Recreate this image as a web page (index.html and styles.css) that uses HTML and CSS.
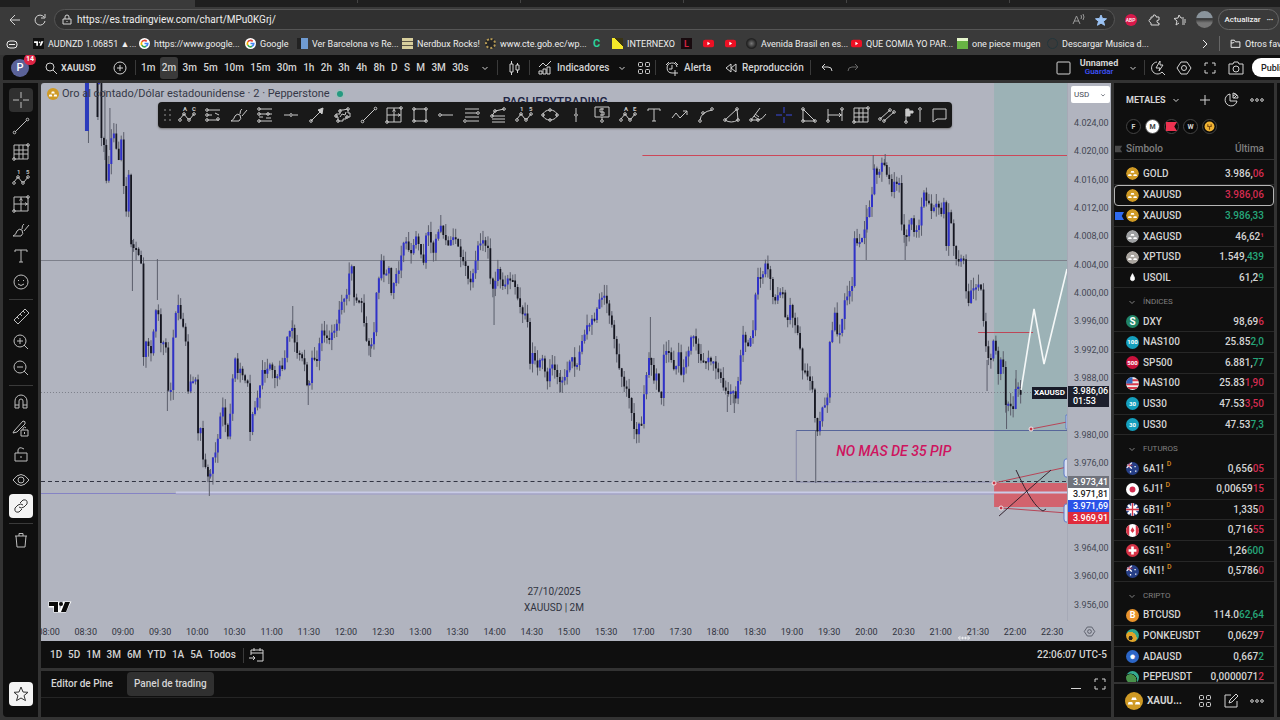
FILE: index.html
```html
<!DOCTYPE html>
<html lang="es">
<head>
<meta charset="utf-8">
<title>XAUUSD 3.986,06 — Unnamed</title>
<link rel="stylesheet" href="styles.css">
</head>
<body>
<div class="window">
  <div class="tabstrip"><span class="tab-active"></span><span class="tab"></span><span class="tab"></span><span class="tab"></span><span class="tab"></span><span class="tab"></span></div>
  <div class="address">
    <button class="plain" aria-label="Atrás" data-icon="back"></button>
    <button class="plain" aria-label="Recargar" data-icon="reload"></button>
    <div class="urlbox">
      <span data-icon="lock"></span>
      <input class="url" aria-label="Dirección" value="https://es.tradingview.com/chart/MPu0KGrj/">
      <button class="plain dim" aria-label="Leer en voz alta" data-icon="read"></button>
      <button class="plain star" aria-label="Favorito" data-icon="starfill"></button>
    </div>
    <span class="abp">ABP</span>
    <button class="plain" aria-label="Extensiones" data-icon="puzzle"></button>
    <button class="plain" aria-label="Favoritos" data-icon="starlist"></button>
    <span class="photo"></span>
    <button class="update">Actualizar<span>•••</span></button>
  </div>
  <nav class="bookmarks">
    <a href="#" class="bm-first" aria-label="Marcadores" data-icon="pill"></a>
    <a href="#" class="bm w105"><i class="fav tvfav" data-icon="tv"></i>AUDNZD 1.06851 ▲...</a>
    <a href="#" class="bm w105"><i class="fav" data-icon="google"></i>https://www.google...</a>
    <a href="#" class="bm w52"><i class="fav" data-icon="google"></i>Google</a>
    <a href="#" class="bm w104"><i class="fav score"></i>Ver Barcelona vs Re...</a>
    <a href="#" class="bm w83"><i class="fav nerd"></i>Nerdbux Rocks!</a>
    <a href="#" class="bm w105"><i class="fav eye"></i>www.cte.gob.ec/wp...</a>
    <a href="#" class="bm w27"><i class="fav green">C</i></a>
    <a href="#" class="bm w69"><i class="fav yellow"></i>INTERNEXO</a>
    <a href="#" class="bm w22"><i class="fav redl">L</i></a>
    <a href="#" class="bm w22" aria-label="YouTube"><i class="fav" data-icon="yt"></i></a>
    <a href="#" class="bm w27" aria-label="YouTube"><i class="fav" data-icon="yt"></i></a>
    <a href="#" class="bm w104"><i class="fav globe"></i>Avenida Brasil en es...</a>
    <a href="#" class="bm w105"><i class="fav" data-icon="yt"></i>QUE COMIA YO PAR...</a>
    <a href="#" class="bm w90"><i class="fav piece"></i>one piece mugen</a>
    <a href="#" class="bm grow"><i class="fav dark"></i>Descargar Musica d...</a>
    <button class="plain" aria-label="Más marcadores" data-icon="right"></button>
    <span class="vline"></span>
    <a href="#" class="bm others"><i class="fav" data-icon="folder"></i>Otros favoritos</a>
  </nav>

  <div class="app">
    <header class="topbar">
      <button class="avatar" aria-label="Perfil">P<span class="badge">14</span></button>
      <button class="tb symbol"><i data-icon="search"></i>XAUUSD</button>
      <button class="tb add" aria-label="Comparar" data-icon="pluscircle"></button>
      <span class="vline"></span>
      <div class="intervals" id="intervals"></div>
      <span class="vline"></span>
      <button class="tb w31" aria-label="Velas" data-icon="candles"></button>
      <span class="vline"></span>
      <button class="tb indic"><i data-icon="indic"></i>Indicadores</button>
      <button class="tb w22" aria-label="Favoritos de indicadores" data-icon="down"></button>
      <button class="tb w22" aria-label="Plantillas" data-icon="four"></button>
      <span class="vline"></span>
      <button class="tb alert"><i data-icon="alarm"></i>Alerta</button>
      <button class="tb replay"><i data-icon="rewind"></i>Reproducción</button>
      <span class="vline"></span>
      <button class="tb w26 undo" aria-label="Deshacer" data-icon="undo"></button>
      <button class="tb w26 dim" aria-label="Rehacer" data-icon="redo"></button>
      <span class="spacer"></span>
      <button class="tb w26" aria-label="Diseño" data-icon="square"></button>
      <button class="tb saved"><b>Unnamed</b><small>Guardar</small></button>
      <button class="tb w22" aria-label="Gestionar diseños" data-icon="down"></button>
      <span class="vline"></span>
      <button class="tb w26" aria-label="Búsqueda rápida" data-icon="quick"></button>
      <button class="tb w26" aria-label="Ajustes" data-icon="gear"></button>
      <button class="tb w26" aria-label="Pantalla completa" data-icon="full"></button>
      <button class="tb w26" aria-label="Captura" data-icon="camera"></button>
      <button class="publish">Publicar</button>
    </header>

    <aside class="rail" id="rail"></aside>

    <main class="center">
      <section class="chart">
        <div class="pane">
          <svg class="plot" id="plot" viewBox="41 83 1027 538" preserveAspectRatio="none">
            <rect x="995" y="83" width="73" height="400" fill="#9cb2b6"/>
            <rect x="995" y="483" width="73" height="24" fill="#d2636e"/>
            <path d="M41 493.5H176" stroke="#8583c4"/>
            <path d="M176 492.5H1068" stroke="#c9cbe6" stroke-width="2"/>
            <path d="M176 494H995" stroke="#9c9bc9"/>
            <path d="M41 260.500H1068" stroke="#7c7f8b"/>
            <path d="M41 392.500H1068" stroke="#7c7f8b" stroke-dasharray="1 2"/>
            <path d="M643 155.500H1068" stroke="#cc4657"/>
            <path d="M979 332.500H1034" stroke="#bd4656"/>
            <path d="M797 430.500H1068" stroke="#56659a"/>
            <path d="M797 431V482H995" fill="none" stroke="#8587a8"/>
            <g id="candles"></g>
            <path d="M41 481.500H1068" stroke="#303341" stroke-dasharray="4 3"/>
            <path d="M1022 390L1035 309L1045 364L1068 269" fill="none" stroke="#f5f8f8" stroke-width="1.600"/>
            <path d="M1032 429L1068 422M995 483L1068 467M1002 508L1068 513" stroke="#b84456"/>
            <path d="M1017 470Q1034 507 1044 511L1047 509M1000 516Q1030 489 1052 470" fill="none" stroke="#33232f"/>
            <g fill="#c63848" stroke="#f3e7ea"><circle cx="1032" cy="429" r="2"/><circle cx="995" cy="483" r="2"/><circle cx="1002" cy="508" r="2"/></g>
            <g fill="#d8def0" stroke="#5d79c8"><path d="M1069 415h-2v14h2M1069 459h-2q-2 0-2 3v12q0 3 2 3h2M1069 504h-2q-2 0-2 3v12q0 3 2 3h2"/></g>
          </svg>
          <div class="legend"><span class="gold" data-icon="gold"></span>Oro al contado/Dólar estadounidense · 2 · Pepperstone<span class="live"></span></div>
          <div class="watermark-top">PAGLIERYTRADING</div>
          <div class="note">NO MAS DE 35 PIP</div>
          <div class="watermark"><span>27/10/2025</span><span>XAUUSD | 2M</span></div>
          <span class="tvlogo" data-icon="tvbig"></span>
          <span class="symtag">XAUUSD</span>
          <div class="floatbar" id="floatbar"><span class="grip" data-icon="grip"></span></div>
        </div>
        <div class="prices">
          <div class="currency"><select aria-label="Divisa"><option>USD</option></select><i data-icon="down"></i></div>
          <div class="scale" id="scale"></div>
          <div class="tag now">3.986,06<br><span>01:53</span></div>
          <div class="tags"><span class="t1">3.973,41</span><span class="t2">3.971,81</span><span class="t3">3.971,69</span><span class="t4">3.969,91</span></div>
        </div>
        <div class="times" id="times"></div>
        <button class="axisgear" aria-label="Ajustes de escala" data-icon="gear"></button>
        <span class="resize" data-icon="hresize"></span>
      </section>
      <div class="ranges"><div class="rangelist" id="ranges"></div><span class="vline"></span><button class="tb w26" aria-label="Ir a fecha" data-icon="calendar"></button><span class="spacer"></span><button class="tb clock">22:06:07 UTC-5</button></div>
      <div class="bottom">
        <div class="tabs"><button class="btab">Editor de Pine</button><button class="btab on">Panel de trading</button><span class="spacer"></span><button class="tb w26" aria-label="Minimizar" data-icon="min"></button><button class="tb w22" aria-label="Maximizar" data-icon="full"></button></div>
        <div class="bottom-body"></div>
      </div>
    </main>

    <aside class="watch">
      <div class="whead"><button class="tb wname">METALES<i data-icon="down"></i></button><span class="spacer"></span><button class="tb w26" aria-label="Añadir símbolo" data-icon="plus"></button><button class="tb w26" aria-label="Resumen" data-icon="pie"></button><button class="tb w26" aria-label="Más" data-icon="dots"></button></div>
      <div class="chips"><button class="chip">F</button><button class="chip on">M</button><button class="chip" aria-label="Bandera" data-icon="redflag"></button><button class="chip">W</button><button class="chip" aria-label="Idea" data-icon="idea"></button></div>
      <div class="cols"><i data-icon="flag"></i><span>Símbolo</span><span>Última</span></div>
      <div class="listwrap"><table class="list"><tbody id="list"></tbody></table></div>
      <div class="wfoot"><span class="bigcoin" data-icon="gold"></span><b>XAUU...</b><span class="spacer"></span><button class="tb w26" aria-label="Vista" data-icon="four"></button><button class="tb w26" aria-label="Notas" data-icon="edit"></button><button class="tb w26" aria-label="Más" data-icon="dots"></button></div>
    </aside>
    <aside class="edge"></aside>
  </div>
</div>
<script src="script.js"></script>
</body>
</html>
```
FILE: styles.css
```css
* { box-sizing: border-box; }
body { margin: 0; background: #333; color: #d4d4d4; font: 500 10px/14px Roboto, "Liberation Sans", sans-serif; overflow: hidden; }
button, input, select { font: inherit; color: inherit; background: none; border: 0; padding: 0; margin: 0; }
a { color: inherit; text-decoration: none; }
i { font-style: normal; }
.ic { display: block; width: 20px; height: 20px; fill: none; stroke: currentColor; flex: none; }
.window { height: 100vh; display: flex; flex-direction: column; background: #3a3a3a; }
.spacer { flex: 1; }
.vline { width: 1px; height: 15px; background: #3a3a3a; flex: none; }

.tabstrip { display: flex; height: 7px; background: #1f1f1f; flex: none; padding-left: 30px; }
.tab-active { width: 165px; background: #3a3a3a; }
.tab { width: 163px; border-right: 1px solid #444; height: 3px; }
.address { display: flex; align-items: center; height: 25px; padding-left: 2px; flex: none; }
.plain { display: flex; align-items: center; justify-content: center; width: 25px; }
.plain.dim { color: #999; }
.urlbox { flex: 1; display: flex; align-items: center; height: 21px; border: 1px solid #555; border-radius: 11px; background: #303030; padding-left: 2px; padding-right: 3px; margin-left: 2px; }
.url { flex: 1; font-weight: 400; font-size: 10px; color: #eee; outline: 0; }
.star { color: #9cc4f5; width: 20px; }
.abp { width: 12px; height: 12px; border-radius: 6px; background: #d8184a; color: #fff; font-size: 5px; line-height: 12px; text-align: center; margin: 0 6px 0 10px; }
.photo { width: 17px; height: 17px; border-radius: 9px; background: linear-gradient(#8a949c 40%, #303030 45%, #777 70%); margin: 0 5px 0 3px; }
.update { display: flex; gap: 6px; height: 21px; align-items: center; border: 1px solid #666; border-radius: 11px; padding: 0 5px 0 6px; margin-right: 1px; color: #eee; font-size: 8px; }
.update span { font-size: 6px; }
.bookmarks { display: flex; align-items: center; height: 23px; flex: none; padding-left: 2px; font-size: 9px; font-weight: 400; color: #eee; white-space: nowrap; overflow: hidden; }
.bm-first { width: 31px; flex: none; }
.bm { display: flex; align-items: center; gap: 4px; flex: none; overflow: hidden; }
.w105 { width: 106px; } .w104 { width: 105px; } .w52 { width: 52px; } .w83 { width: 83px; } .w27 { width: 21px; } .w69 { width: 69px; } .w22 { width: 22px; } .w90 { width: 90px; }
.grow { flex: 1; }
.fav { width: 11px; height: 11px; flex: none; display: flex; align-items: center; justify-content: center; font-size: 9px; font-weight: 700; }
.fav .ic { width: 11px; height: 11px; }
.tvfav { background: #101010; color: #fff; }
.score { background: linear-gradient(90deg, #222 35%, #6f9bd2 35%); }
.nerd { background: repeating-linear-gradient(#d8cf9d 0 3px, #5c5546 3px 4px); }
.eye { border: 2px dotted #b79b55; border-radius: 6px; background: #262626; }
.green { color: #2bd19a; font-size: 11px; }
.yellow { background: linear-gradient(45deg, #f5e929 60%, #3a3515 60%); }
.redl { background: #180a0e; color: #d22440; }
.globe { border-radius: 6px; background: radial-gradient(#777, #222 60%); }
.piece { background: linear-gradient(#e5f5cc 30%, #68b344 30%); }
.dark { border: 1px solid #24363c; border-radius: 6px; }
.others { width: 50px; margin-left: 10px; }
.bookmarks .vline { background: #666; }
.bookmarks .plain { width: 29px; }

.app { flex: 1; min-height: 0; display: grid; grid-template: 25px minmax(0, 1fr) / 35px minmax(0, 1fr) 160px 3px; gap: 3px 3px; padding: 0 0 3px 3px; background: #333; }
.topbar { grid-column: 1 / -1; display: flex; align-items: center; background: #0f0f0f; border-top-left-radius: 4px; overflow: hidden; }
.tb { display: flex; align-items: center; justify-content: center; white-space: nowrap; height: 20px; }
.w31 { width: 31px; } .w26 { width: 26px; flex: none; } .tb.w22 { width: 22px; flex: none; }
.dim { color: #666; }
.avatar { width: 18px; height: 18px; border-radius: 9px; background: #5a6299; color: #fff; font-size: 11px; margin-left: 8px; position: relative; flex: none; }
.badge { position: absolute; right: -7px; top: -5px; background: #dc2444; color: #fff; border-radius: 6px; width: 12px; height: 11px; font-size: 7px; line-height: 11px; font-weight: 700; }
.symbol { width: 66px; margin-left: 9px; font-weight: 700; justify-content: flex-start; padding-left: 3px; font-size: 9px; }
.add { width: 31px; }
.intervals { display: flex; justify-content: space-between; align-items: center; width: 361px; padding-left: 3px; flex: none; }
.interval { height: 22px; padding: 0 2px; border-radius: 3px; }
.interval.icon { width: 24px; padding: 0 2px; }
.interval.on { background: #3a3a3a; }
.indic { width: 81px; padding-left: 5px; justify-content: flex-start; gap: 2px; }
.alert { width: 65px; padding-left: 6px; justify-content: flex-start; gap: 2px; }
.replay { width: 89px; gap: 1px; justify-content: flex-start; }
.undo { margin-left: 3px; }
.saved { flex-direction: column; width: 46px; line-height: 9px; }
.saved small { font-size: 8px; color: #3f54ff; line-height: 8px; }
.saved b { font-weight: 700; font-size: 9px; }
.publish { background: #fff; color: #222; border-radius: 9px; height: 19px; width: 60px; margin: 0 -32px 0 3px; padding-left: 9px; text-align: left; font-size: 9px; flex: none; }

.rail { background: #0f0f0f; display: flex; flex-direction: column; align-items: center; padding: 4px 0 10px; border-bottom-left-radius: 4px; }
.tool { width: 24px; height: 24px; margin: 1px 0; border-radius: 4px; display: flex; align-items: center; justify-content: center; color: #bdbdbd; }
.tool.on { background: #303030; }
.tool.lit { background: #f4f4f4; color: #333; }
.tool.last { margin-top: auto; }
.sep { width: 24px; height: 1px; background: #3a3a3a; margin: 4px 0 3px; }

.center { display: flex; flex-direction: column; min-width: 0; }
.chart { flex: 1; min-height: 0; position: relative; display: grid; grid-template: minmax(0, 1fr) 20px / minmax(0, 1fr) 43px; background: #b1b4bf; color: #444854; overflow: hidden; border-top-left-radius: 3px; }
.pane { position: relative; overflow: hidden; border-right: 1px solid #a6a9b6; }
.plot { position: absolute; inset: 0; width: 100%; height: 100%; }
.legend { position: absolute; left: 6px; top: 4px; display: flex; align-items: center; gap: 3px; font-size: 11px; font-weight: 400; color: #353847; white-space: nowrap; }
.gold .ic { width: 12px; height: 12px; }
.live { width: 6px; height: 6px; border-radius: 3px; background: #259a80; margin-left: 4px; box-shadow: 0 0 0 2px #a4bbbb; }
.watermark-top { position: absolute; left: 45%; top: 12px; font-size: 12px; color: #202443; }
.note { position: absolute; left: 77.5%; top: 67%; font-size: 14px; line-height: 16px; font-style: italic; font-weight: 500; color: #ce145e; white-space: nowrap; }
.watermark { position: absolute; left: 50%; bottom: 6px; transform: translateX(-50%); display: flex; flex-direction: column; text-align: center; gap: 2px; color: #30333e; font-weight: 400; }
.tvlogo { position: absolute; left: 7px; bottom: 4px; color: #0a0a0a; }
.tvlogo .ic { width: 24px; height: 20px; }
.symtag { position: absolute; right: 0; top: 56.5%; background: #171a27; color: #fff; font-size: 8px; line-height: 12px; padding: 0 2px; font-weight: 700; }
.floatbar { position: absolute; left: 117px; top: 19px; display: flex; align-items: center; width: 794px; height: 26px; background: #191919; border-radius: 4px; color: #c9c9c9; box-shadow: 0 1px 2px #777; }
.floatbar .tb { flex: 1; height: 26px; min-width: 0; }
.grip { width: 16px; color: #555; }
.picked { color: #3a4ae0; }
.prices { position: relative; display: flex; flex-direction: column; padding: 3px 1px 2px; font-weight: 400; font-size: 9px; }
.currency { display: flex; align-items: center; background: #fff; border-radius: 2px; height: 17px; font-size: 8px; width: 39px; flex: none; margin: 0 0 6px 2px; }
.currency select { appearance: none; flex: 1; min-width: 0; padding-left: 3px; outline: 0; }
.currency .ic { width: 14px; height: 14px; }
.scale { flex: 1; display: flex; flex-direction: column; }
.scale span { flex: 1; display: flex; align-items: center; padding-left: 5px; }
.tag { position: absolute; left: 0; width: 41px; padding-left: 5px; font-weight: 500; color: #fff; line-height: 10px; }
.now { top: 56.400%; background: #1c1f2c; height: 21px; }
.tags { position: absolute; left: 0; width: 41px; top: 73%; display: flex; flex-direction: column; font-weight: 500; color: #fff; line-height: 12px; }
.tags span { padding-left: 5px; height: 12px; }
.t1 { background: #70737c; } .t2 { background: #fff; color: #222; } .t3 { background: #2b52e8; } .t4 { background: #e02b3c; }
.times { display: flex; margin: 0 -3px 0 -11px; padding-top: 2px; align-items: center; font-weight: 400; font-size: 9px; color: #30333e; overflow: hidden; }
.times span { flex: 1; text-align: center; }
.axisgear { display: flex; align-items: center; justify-content: center; }
.axisgear .ic { width: 15px; height: 15px; }
.resize { position: absolute; right: 138px; bottom: -4px; color: #fff; }
.resize .ic { width: 18px; height: 14px; }
.ranges { display: flex; align-items: center; height: 27px; padding-top: 1px; background: #0f0f0f; flex: none; }
.rangelist { display: flex; width: 186px; justify-content: space-between; margin: 0 7px 0 9px; flex: none; }
.clock { padding-right: 4px; }
.bottom { height: 46px; margin-top: 3px; background: #0f0f0f; flex: none; }
.tabs { display: flex; height: 27px; align-items: center; padding: 0 0 0 3px; border-bottom: 1px solid #252525; }
.btab { height: 24px; padding: 0 7px; margin-right: 7px; border-radius: 4px; }
.btab.on { background: #303030; }

.watch { background: #0f0f0f; display: flex; flex-direction: column; min-height: 0; }
.whead { display: flex; align-items: center; height: 33px; flex: none; padding-right: 4px; }
.wname { font-weight: 700; margin-left: 12px; font-size: 9px; }
.chips { display: flex; gap: 4px; height: 21px; align-items: center; padding-left: 12px; flex: none; }
.chip { width: 15px; height: 15px; border-radius: 8px; border: 1px solid #444; background: #090909; font-size: 7px; line-height: 12px; font-weight: 700; display: flex; align-items: center; justify-content: center; }
.chip.on { background: #fff; color: #444; }
.chip .ic { width: 11px; height: 11px; flex: none; }
.cols { display: flex; justify-content: space-between; align-items: center; height: 23px; flex: none; padding: 2px 10px 0 1px; border-bottom: 1px solid #333; color: #808080; }
.cols i .ic { width: 8px; height: 10px; }
.cols i + span { margin-right: auto; margin-left: 3px; }
.listwrap { flex: 1; min-height: 0; overflow: hidden; padding-top: 4px; }
.list { display: block; height: calc(100% + 6px); }
.list tbody { display: flex; flex-direction: column; height: 100%; }
.row { flex: 41 1 0; display: flex; align-items: center; min-height: 0; border-bottom: 1px solid #272727; }
.row.sel { border: 1px solid #b5b5b5; border-radius: 4px; }
.row td { padding: 0; display: flex; align-items: center; }
.row td.mark { width: 10px; padding-left: 1px; flex: none; }
.row.sel td.mark { width: 9px; }
.mark .ic { width: 9px; height: 10px; }
.coin { width: 13px; height: 13px; border-radius: 7px; overflow: hidden; margin: 0 4px 0 2px; flex: none; display: flex; align-items: center; justify-content: center; font-size: 6px; color: #fff; font-weight: 700; }
.coin .ic { width: 13px; height: 13px; }
.coin.teal { background: #159fbd; } .coin.red { background: #c9123c; } .coin.dxy { background: #218466; font-size: 10px; } .coin.btc { background: #e8932b; font-size: 9px; } .coin.ada { background: #2c66c7; } .coin.ponke { background: radial-gradient(circle at 35% 70%, #222 15%, #e0a52a 18% 48%, #30a48c 50%); } .coin.pepe { background: radial-gradient(circle at 35% 70%, #48934b 45%, #0f0f0f 50%, #34ab91 55%); }
.name { font-weight: 500; }
.name sup { color: #d58a22; font-size: 7px; margin: -8px 0 0 3px; line-height: 7px; font-weight: 500; }
.row td.val { margin-left: auto; padding-right: 10px; font-weight: 500; }
.row.sel td.val { padding-right: 9px; }
.up { color: #26a67a; } .down { color: #d32b50; }
.group { flex: 49 1 0; display: flex; align-items: center; min-height: 0; color: #808080; font-weight: 400; font-size: 8px; }
.group td { display: flex; align-items: center; padding: 4px 0 0 8px; gap: 1px; }
.wfoot { display: flex; align-items: center; height: 35px; border-top: 2px solid #333; padding: 0 4px 0 11px; flex: none; }
.bigcoin .ic { width: 18px; height: 18px; }
.wfoot b { margin-left: 4px; font-size: 10px; }
.edge { background: #0f0f0f; }
```
FILE: script.js
```js
const dot = (...p) => p.map(([x, y]) => `<circle cx="${x}" cy="${y}" r="1.300"/>`).join('');
const P = d => `<path d="${d}"/>`;
const letters = (a, b) => `<g stroke="none" fill="currentColor" font-size="6" font-weight="700"><text x="6" y="6">${a}</text><text x="15" y="6">${b}</text></g>`;
const wave = P('M3 14L7 9L11 14L13 14L17 9') + dot([3, 15], [7, 9], [12, 15], [17, 9]);
const bars = '<circle cx="10" cy="10" r="10" fill="BG" stroke="none"/><path d="M8 6h4l1 3H7zM4 11h4l1 3H3zM12 11h4l1 3h-6z" fill="#fff" stroke="none"/>';
const ICONS = {
  back: P('M15 10H5M10 5L5 10L10 15'),
  reload: P('M14 7A5 5 0 1 0 15 11M15 4V8H11'),
  lock: P('M6 9h8v5H6zM8 9V7a2 2 0 0 1 4 0v2M10 11v1'),
  read: P('M5 14L8.500 6L12 14M6 11h5M13 5q1 2 0 4M15 4q2 3 0 6'),
  starfill: '<path fill="currentColor" d="M10 5l1.500 3.500 4 .3-3 2.500 1 4-3.500-2.200L6.500 15.300l1-4-3-2.500 4-.3z"/>',
  star: P('M10 3l2 5 5 .3-4 3.300 1.500 5L10 14l-4.500 2.600L7 11.600 3 8.300 8 8z'),
  puzzle: P('M6 7h2q0-3 2-2t1 2h3v3q-3 0-2 2t2 1v2H6v-2q-2-1-2-2.500T6 9z'),
  starlist: P('M14 8h-3L9 5 8 8 4 8.500l3 2.500-1 4 3-2M12 10h4M12 12h4M12 14h3'),
  pill: '<rect x="5" y="7" width="10" height="7" rx="3"/>' + P('M7 10.500h6'),
  tv: '<path stroke="none" fill="currentColor" d="M2 6h7v8H6V9H2zM15 6h4l-4 8h-3z"/><circle cx="12" cy="8" r="1.500" fill="currentColor" stroke="none"/>',
  tvbig: '<path stroke="#fff" stroke-width="3" fill="#fff" d="M0 6h8v8H5V9H0zM14 6h5l-4 8h-4z"/><path stroke="none" fill="#0a0a0a" d="M-1 5h9v10H4V9h-5zM15 5h5l-4 10h-5z"/><circle cx="11" cy="7" r="2" fill="#0a0a0a" stroke="none"/>',
  google: '<circle cx="10" cy="10" r="10" fill="#fff" stroke="none"/><g stroke-width="3"><path stroke="#e34133" d="M5 7a6 6 0 0 1 9-1"/><path stroke="#f4b400" d="M5 7a7 7 0 0 0 0 6"/><path stroke="#34a853" d="M5 13a6 6 0 0 0 8 2"/><path stroke="#4285f4" d="M10 10h6q0 3-3 5"/></g>',
  yt: '<rect x="0" y="3" width="20" height="14" rx="4" fill="#ed1024" stroke="none"/><path fill="#fff" stroke="none" d="M8 7l5 3-5 3z"/>',
  right: P('M8 6l4 4-4 4'), down: P('M7.500 9L10 11.500L12.500 9'),
  folder: '<g stroke-width="1.800">' + P('M2 4h6l2 3h8v10H2zM8 7l-2 2H2') + '</g>',
  search: '<circle cx="9" cy="9" r="4"/>' + P('M12 12l4 4'),
  pluscircle: '<circle cx="10" cy="10" r="6"/>' + P('M10 7v6M7 10h6'),
  candles: P('M6 6h3v8H6zM7.500 3v3M7.500 14v3M12 7h3v5h-3zM13.500 5v2M13.500 12v3'),
  indic: P('M4 9l4-4 3 3 5-5M4 16v-3h3v3zM8 16v-5h3v5zM12 16V9h3v7z'),
  four: '<rect x="4.500" y="4.500" width="4" height="4" rx="1"/><rect x="11.500" y="4.500" width="4" height="4" rx="1"/><rect x="4.500" y="11.500" width="4" height="4" rx="1"/><rect x="11.500" y="11.500" width="4" height="4" rx="1"/>',
  alarm: P('M15 9A5 5 0 1 0 10 15M10 7v4H7M4 7L7 4M13 4l3 3M13 12v6M10 15h6'),
  rewind: P('M10 6v8L5 10zM15 6v8l-5-4z'),
  undo: P('M8 6L5 9l3 3M5 9h6q4 0 4 4'), redo: P('M12 6l3 3-3 3M15 9H9q-4 0-4 4'),
  square: '<rect x="4" y="4" width="13" height="12" rx="1"/>',
  quick: P('M9 4A6 6 0 1 0 14 14l3 3M12 3L8 10h4l-1 3 4-6h-3z'),
  gear: P('M7 4h6l4 6-4 6H7L3 10z') + '<circle cx="10" cy="10" r="2.500"/>',
  full: P('M5 8V5h3M12 5h3v3M15 12v3h-3M8 15H5v-3'),
  camera: P('M3 6h4l1-2h4l1 2h4v10H3z') + '<circle cx="10" cy="11" r="3"/>',
  cross: P('M10 2v6M10 12v6M2 10h6M12 10h6'),
  line: P('M4 16L16 4') + dot([3.500, 16.500], [16.500, 3.500]),
  grid: P('M3 3h14v14H3zM8 3v14M12 3v14M3 8h14M3 12h14') + dot([3, 17], [17, 3]),
  wave15: wave + letters('1', '5'), waveAC: wave + letters('A', 'C'), waveAE: wave + letters('A', 'E'),
  gann: P('M3 3h14v14H3zM10 3v14M3 10h14M8.500 6.500l1.500-2 1.500 2M14 8.500l2 1.500-2 1.500') + dot([3, 17], [17, 3]),
  brush: P('M2 16q3-1 4-5 2-3 5-1 2 4-1 6zM11 9q0-4 2-5M13 11l5-6'),
  text: P('M4 6V4h12v2M10 4v12M8 16h4'),
  smile: '<circle cx="10" cy="10" r="7"/>' + P('M7.500 8v1M12.500 8v1M7 12q3 3 6 0'),
  ruler: P('M3 14L14 3l4 4L7 18zM6 11l2 2M9 8l2 2M12 5l2 2'),
  zin: '<circle cx="9" cy="9" r="6"/>' + P('M13 13l4 4M9 6v6M6 9h6'),
  zout: '<circle cx="9" cy="9" r="6"/>' + P('M13 13l4 4M6 9h6'),
  magnet: P('M4 16V9a6 6 0 0 1 12 0v7h-4V9a2 2 0 0 0-4 0v7zM4 13h4M12 13h4'),
  penlock: P('M3 13L12 3q3 0 2 3L6 14l-4 1zM10 12h7v6h-7zM12 12v-2q2-2 3 0M13.500 14v2'),
  unlock: P('M4 9h12v8H4zM7 9V6q1-4 6-1M10 12v2'),
  eyeic: P('M2 10q8-11 16 0-8 11-16 0') + '<circle cx="10" cy="10" r="3"/>',
  link: P('M9 7l3-3q5-1 4 4l-3 3q-3 2-5 0M11 13l-3 3q-5 1-4-4l3-3q3-2 5 0'),
  trash: P('M4 6h12M8 6V3.500h4V6M5 6l1 11h8l1-11'),
  fibch: P('M4 5h13M4 10h5M12 8l4 2M4 15h12') + dot([4, 5], [4, 10], [4, 15], [15, 14]),
  fibch2: P('M4 4h13M4 9h13M4 12h4M11 13h5M4 16h13') + dot([4, 4], [4, 9], [13, 9], [4, 16]),
  hdot: P('M3 10h5M12 10h5') + dot([10, 10]),
  arrow: P('M4 16L15 5') + '<path fill="currentColor" d="M16 3l-1 6-4-4z"/>' + dot([4, 16]),
  cluster: P('M5 16V12H3V9h4V5h3l5-1v4h2v4h-4v2h-3v2zM7 12l2-3 3 1 1-3') + dot([5, 16], [15, 4], [3, 11], [14, 12], [7, 6]),
  rect: P('M4 4h12v12H4z') + dot([4, 4], [16, 4], [4, 16], [16, 16]),
  hray: P('M5 10h12') + dot([4, 10]),
  fib: P('M3 4h14M3 8h12M3 12h14M5 16h12') + dot([16, 8], [3, 16]),
  speed: P('M4 11l3-5 9-2M4 11h13M4 14h13M4 17h13') + dot([4, 11], [7, 6], [16, 4]),
  ellipse: '<ellipse cx="10" cy="10" rx="7" ry="5"/>' + dot([3, 10], [17, 10], [10, 5], [10, 15]),
  vdot: P('M10 3v5M10 12v5') + dot([10, 10]),
  pricenote: P('M3 2h14v10H3zM10 12v3M12 4H8v3h4v3H8M10 3v8') + dot([10, 16]),
  zig: P('M2 13l4-5 4 5 7-7M13 6h4v4'),
  curve: P('M4 15q1-8 12-10') + dot([4, 16], [7, 8], [16, 4]),
  tri: P('M3 15L15 4l1 11q-7 4-13 0') + dot([3, 15], [15, 4], [16, 15]),
  fork: P('M3 15L12 3M3 15h7q4 0 8-6M6 11l5 4M7 9l4 3') + dot([3, 15], [10, 15]),
  tri2: P('M4 16V4l12 12z') + dot([4, 4], [4, 16], [16, 16]),
  range: P('M3 4v12M17 4v12M3 10h14M14 8l2 2-2 2') + dot([3, 16], [17, 4]),
  channel: P('M3 14L13 5M7 16L17 7') + dot([3, 14], [13, 5], [7, 16], [17, 7]),
  profile: '<path fill="currentColor" d="M3 4h3v2h4v2H7v3H3z"/>' + P('M3 4v13M17 6v11') + dot([3, 17], [17, 4]),
  comment: P('M4 4h13v10H8l-4 3z'),
  grip: '<g stroke-width="2" stroke-dasharray="2 3">' + P('M7 4v12M12 4v12') + '</g>',
  hresize: P('M2 10h16M5 7l-3 3 3 3M15 7l3 3-3 3M8 8v4M12 8v4'),
  calendar: P('M4 10V5h12v11h-6M4 8h12M7 3v3M13 3v3M2 13h6M6 11l2 2-2 2'),
  min: P('M5 14.500h10'),
  plus: P('M10 5v10M5 10h10'),
  pie: P('M9 4A6 6 0 1 0 16 11H9zM12 8V3q5 1 5 5zM12 6l3-2M13 8l3-3'),
  dots: dot([5, 10], [10, 10], [15, 10]),
  edit: P('M10 4H4v12h12v-6M8 12l1-3 6-6 2 2-6 6z'),
  flag: '<path fill="#4a4a4a" stroke="none" d="M0 2h18l-5 8 5 8H0z"/>',
  blueflag: '<path fill="#2f6bf0" stroke="none" d="M0 1h20l-5 9 5 9H0z"/>',
  redflag: '<path fill="#ec3250" stroke="none" d="M0 2h20l-5 8 5 8H0z"/>',
  idea: '<circle cx="10" cy="10" r="9" fill="#efb233" stroke="none"/><path stroke="#7b4b11" stroke-width="2" d="M7 6v4h6V6M10 10v6"/>',
  gold: bars.replace('BG', '#cf9a25'), silver: bars.replace('BG', '#9fa1a3'), plat: bars.replace('BG', '#aaa59f'),
  oil: '<path d="M10 4l3 6q1 5-3 5t-3-5z" fill="#fff"/>',
  us: '<rect width="20" height="20" fill="#eee" stroke="none"/><path stroke="#d93b4c" stroke-width="3" d="M0 5h20M0 11h20M0 17h20"/><path fill="#3469bd" stroke="none" d="M0 0h10v10H0z"/>',
  au: '<rect width="20" height="20" fill="#263f87" stroke="none"/><path stroke="#fff" stroke-width="2" d="M0 2l9 8M9 1L1 9"/><path stroke="#d63346" d="M5 0v9M0 5h10"/><path fill="#fff" stroke="none" d="M13 6h2v2h-2zM14 13h2v2h-2zM6 14h2v2H6z"/>',
  jp: '<rect width="20" height="20" fill="#fff" stroke="none"/><circle cx="10" cy="10" r="4.500" fill="#d52c4f" stroke="none"/>',
  gb: '<rect width="20" height="20" fill="#304b91" stroke="none"/><path stroke="#fff" stroke-width="4" d="M0 0l20 20M20 0L0 20M10 0v20M0 10h20"/><path stroke="#d23445" stroke-width="2" d="M10 0v20M0 10h20"/>',
  ca: '<rect width="20" height="20" fill="#fff" stroke="none"/><path fill="#d93447" stroke="none" d="M0 0h5v20H0zM15 0h5v20h-5zM10 5l3 5-3 4-3-4z"/>',
  ch: '<rect width="20" height="20" fill="#d83347" stroke="none"/><path stroke="#fff" stroke-width="4" d="M10 4v12M4 10h12"/>'
};
const icon = n => `<svg class="ic" viewBox="0 0 20 20" aria-hidden="true">${ICONS[n]}</svg>`;
const $ = id => document.getElementById(id);

$('intervals').innerHTML = ['1m', '2m', '3m', '5m', '10m', '15m', '30m', '1h', '2h', '3h', '4h', '8h', 'D', 'S', 'M', '3M', '30s']
  .map(t => `<button class="interval${t === '2m' ? ' on' : ''}">${t}</button>`).join('') + `<button class="interval icon" aria-label="Más intervalos">${icon('down')}</button>`;
$('ranges').innerHTML = ['1D', '5D', '1M', '3M', '6M', 'YTD', '1A', '5A', 'Todos'].map(t => `<button class="range">${t}</button>`).join('');

$('rail').innerHTML = ['cross', 'line', 'grid', 'wave15', 'gann', 'brush', 'text', 'smile', '-', 'ruler', 'zin', 'zout', '-', 'magnet', 'penlock', 'unlock', 'eyeic', 'link', '-', 'trash', 'star']
  .map(n => n === '-' ? '<span class="sep"></span>' : `<button class="tool${n === 'cross' ? ' on' : ''}${n === 'link' || n === 'star' ? ' lit' : ''}${n === 'star' ? ' last' : ''}" aria-label="${n}">${icon(n)}</button>`).join('');
$('floatbar').innerHTML += ['waveAC', 'fibch', 'brush', 'fibch2', 'hdot', 'arrow', 'cluster', 'line', 'gann', 'rect', 'hray', 'fib', 'speed', 'wave15', 'ellipse', 'vdot', 'pricenote', 'waveAE', 'text', 'zig', 'curve', 'tri', 'fork', 'cross', 'tri2', 'range', 'grid', 'channel', 'profile', 'comment']
  .map(n => `<button class="tb${n === 'cross' ? ' picked' : ''}" aria-label="${n}">${icon(n)}</button>`).join('');

/* Levels covered by the price tags are left blank. */
const hidden = [3984, 3972, 3968];
let scale = '';
for (let p = 4024; p >= 3956; p -= 4) {
  scale += `<span>${hidden.includes(p) ? '' : (p / 1000).toFixed(3) + ',00'}</span>`;
}
$('scale').innerHTML = scale;
let times = '';
for (let m = 480; m <= 1350; m += 30) {
  if (m === 960 || m === 990) continue;
  times += `<span>${String(Math.floor(m / 60)).padStart(2, '0')}:${String(m % 60).padStart(2, '0')}</span>`;
}
$('times').innerHTML = times;

const rows = [
  ['gold', 'GOLD', '3.986,', '06', 0], ['gold', 'XAUUSD', '', '3.986,06', 0, 'sel'], ['gold', 'XAUUSD', '', '3.986,33', 1, 'flagged'],
  ['silver', 'XAGUSD', '46,62', '¹', 0], ['plat', 'XPTUSD', '1.549,', '439', 1], ['oil', 'USOIL', '61,2', '9', 1],
  'ÍNDICES', ['dxy:S', 'DXY', '98,69', '6', 0], ['teal:100', 'NAS100', '25.85', '2,0', 1], ['red:500', 'SP500', '6.881,', '77', 1],
  ['us', 'NAS100', '25.83', '1,90', 0], ['teal:30', 'US30', '47.53', '3,50', 0], ['teal:30', 'US30', '47.53', '7,3', 1],
  'FUTUROS', ['au', '6A1!', '0,656', '05', 0, 'd'], ['jp', '6J1!', '0,00659', '15', 0, 'd'], ['gb', '6B1!', '1,335', '0', 0, 'd'],
  ['ca', '6C1!', '0,716', '55', 0, 'd'], ['ch', '6S1!', '1,26', '600', 1, 'd'], ['au', '6N1!', '0,5786', '0', 0, 'd'],
  'CRIPTO', ['btc:B', 'BTCUSD', '114.0', '62,64', 1], ['ponke:', 'PONKEUSDT', '0,0629', '7', 0], ['ada:✺', 'ADAUSD', '0,667', '2', 1], ['pepe:', 'PEPEUSDT', '0,0000071', '2', 0]
];
$('list').innerHTML = rows.map(r => {
  if (typeof r === 'string') return `<tr class="group"><td>${icon('down')}${r}</td></tr>`;
  const [i, n, a, b, up, f] = r;
  const [cls, txt] = i.split(':');
  const coin = txt === undefined ? `<span class="coin">${icon(i)}</span>` : `<span class="coin ${cls}">${txt}</span>`;
  return `<tr class="row ${f === 'sel' ? 'sel' : ''}"><td class="mark">${f === 'flagged' ? icon('blueflag') : ''}</td><td class="name">${coin}${n}${f === 'd' ? '<sup>D</sup>' : ''}</td><td class="val">${a}<span class="${up ? 'up' : 'down'}">${b}</span></td></tr>`;
}).join('');

document.querySelectorAll('[data-icon]').forEach(e => { e.innerHTML = icon(e.dataset.icon) + e.innerHTML; });

/* Closing levels along the session; candles are spaced evenly between them. */
const track = '99,84 100,117 102,147 105,141 107,194 109,160 111,140 113,132 115,135 117,156 119,162 121,139 123,153 125,228 129,172 130,243 133,247 137,246 140,262 142,264 143,360 146,340 149,345 151,355 155,320 158,300 160,345 163,340 166,350 167,392 171,390 173,340 175,318 178,305 180,314 184,330 186,345 187,391 193,380 197,378 198,437 201,425 203,457 205,465 208,475 210,480 212,460 215,453 218,440 221,410 224,409 226,430 228,437 231,410 233,380 235,353 238,375 240,365 244,380 248,381 250,432 253,412 256,405 259,395 262,365 265,375 269,365 273,372 277,382 280,365 284,368 286,345 289,330 293,327 296,348 301,357 305,365 308,388 311,375 312,358 317,365 319,347 322,330 326,340 330,338 336,330 340,310 343,300 347,293 350,272 352,266 354,296 358,300 363,305 366,340 370,346 374,340 376,298 380,273 382,258 384,275 388,274 390,262 392,298 396,275 400,272 403,243 407,243 411,257 416,237 420,247 424,265 426,234 430,233 434,254 437,232 441,228 444,236 448,243 453,240 457,236 461,258 465,262 470,282 475,270 478,248 481,245 484,240 489,252 492,300 495,280 499,270 502,287 507,281 513,280 516,286 519,300 523,312 527,318 528,320 530,369 533,352 538,367 542,352 547,384 551,366 555,366 559,382 563,380 568,370 571,355 576,368 580,355 582,340 586,330 590,322 595,320 598,303 602,297 605,295 609,313 613,327 616,345 620,368 624,385 628,390 631,400 633,420 636,437 640,420 643,425 645,390 648,365 651,357 654,380 658,375 660,398 663,395 664,358 668,350 673,362 676,374 679,349 681,375 686,360 690,345 693,336 697,345 703,362 708,360 715,365 720,375 727,393 733,390 737,400 740,370 743,330 748,348 752,335 755,325 757,277 762,280 766,263 770,275 774,300 778,298 783,285 787,328 791,307 795,322 800,335 802,367 808,375 813,385 816,420 818,434 821,417 824,408 828,402 830,348 833,330 836,313 839,345 842,325 846,300 850,295 853,285 855,237 859,245 863,235 866,230 869,210 873,195 874,168 879,175 882,163 886,168 890,178 892,195 896,180 900,185 902,225 907,238 912,215 916,237 920,225 922,213 924,190 928,200 933,212 938,203 944,215 945,197 947,246 950,207 953,226 956,262 960,258 965,260 968,305 972,292 978,285 980,283 983,297 985,330 988,360 992,358 994,340 997,355 999,372 1003,358 1005,372 1006,408 1010,400 1014,408 1017,385 1021,392'
  .split(' ').map(p => p.split(',').map(Number));
const level = x => {
  let k = 1;
  while (k < track.length - 1 && track[k][0] < x) k++;
  const [x0, y0] = track[k - 1], [x1, y1] = track[k];
  return y0 + (y1 - y0) * Math.min(1, (x - x0) / (x1 - x0));
};
const noise = n => { const v = Math.sin(n * 127.1) * 43758.5; return v - Math.floor(v); };
const wicks = [], up = [], down = [];
let prev = 84;
for (let i = 0, x = 99; x < 1022; i++, x = 99 + i * 2.480) {
  const y = level(x) + (noise(i) - .5) * 6;
  const t = Math.min(y, prev), h = Math.max(2, Math.abs(y - prev));
  wicks.push(`M${x.toFixed(1)} ${(t - noise(i + 500) * 11).toFixed(1)}V${(t + h + noise(i + 900) * 11).toFixed(1)}`);
  (y < prev ? up : down).push(`M${x.toFixed(1)} ${t.toFixed(1)}v${h.toFixed(1)}`);
  prev = y;
}
wicks.push('M88.500 83V143M98 83V120M105 90V160M110 108V150M132.500 240V291M157.500 259V300M167.500 390V411M209.500 470V496M293 306V330M308.500 380V405M371 345V357M494.500 280V325M561 370V392M610 300V315M651 317V360M728 395V412M735 395V413M816.500 430V483M906 235V260M867 205V260M874 155V170M988 360V391M1007.500 400V429M1017 370V390M886 154V166');
down.push('M97.500 83V117');
$('candles').innerHTML = `<g fill="none"><path d="${wicks.join('')}" stroke="#5a5d6a"/><path d="${down.join('')}" stroke="#151620" stroke-width="1.800"/><path d="${up.join('')}" stroke="#3032c8" stroke-width="2"/><path d="M87 83V131" stroke="#2b3bbd" stroke-width="4"/></g>`;
```
